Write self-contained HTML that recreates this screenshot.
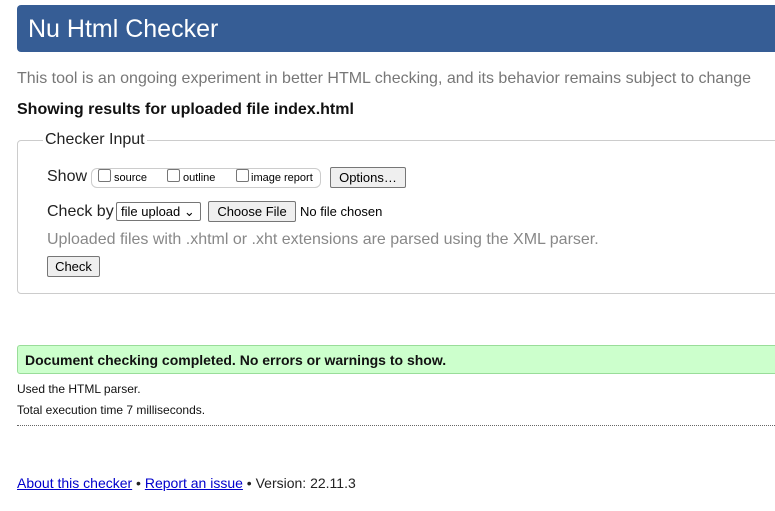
<!DOCTYPE html>
<html><head><style>
body{margin:0;width:775px;height:511px;overflow:hidden;background:#fff;font-family:"Liberation Sans",sans-serif;position:relative}
.a{position:absolute;white-space:nowrap}
.btn{position:absolute;border:1px solid #767676;background:#efefef;border-radius:2px;font-size:13px;color:#000;box-sizing:border-box;text-align:center}
.cb{position:absolute;width:11px;height:11px;border:1px solid #767676;border-radius:2px;background:#fff}
</style></head><body>
<div class="a" style="left:17px;top:5px;width:758px;height:47px;background:#365d95;border-radius:4px 0 0 4px"></div>
<div class="a" style="left:28px;top:15px;font-size:25px;color:#fff">Nu Html Checker</div>
<div class="a" style="left:17px;top:70px;font-size:16px;color:#777">This tool is an ongoing experiment in better HTML checking, and its behavior remains subject to change</div>
<div class="a" style="left:17px;top:101px;font-size:16px;font-weight:bold;color:#111">Showing results for uploaded file index.html</div>
<div class="a" style="left:17px;top:140px;width:770px;height:154px;border:1px solid #ccc;border-radius:4px;box-sizing:border-box"></div>
<div class="a" style="left:43px;top:131px;padding:0 2px;background:#fff;font-size:16px;color:#222">Checker Input</div>
<div class="a" style="left:47px;top:168px;font-size:16px;color:#222">Show</div>
<div class="a" style="left:91px;top:168px;width:228px;height:18px;border:1px solid #ccc;border-radius:6px"></div>
<div class="cb" style="left:98px;top:169px"></div><div class="a" style="left:114px;top:172px;font-size:11px">source</div>
<div class="cb" style="left:167px;top:169px"></div><div class="a" style="left:183px;top:172px;font-size:11px">outline</div>
<div class="cb" style="left:236px;top:169px"></div><div class="a" style="left:251px;top:172px;font-size:11px">image report</div>
<div class="btn" style="left:330px;top:167px;width:76px;height:21px;line-height:19px">Options…</div>
<div class="a" style="left:47px;top:203px;font-size:16px;color:#222">Check by</div>
<div class="a" style="left:116px;top:202px;width:85px;height:19px;border:1px solid #767676;border-radius:2px;box-sizing:border-box;font-size:13px;line-height:17px;padding-left:4px">file upload ⌄</div>
<div class="btn" style="left:208px;top:201px;width:88px;height:21px;line-height:19px">Choose File</div>
<div class="a" style="left:300px;top:204px;font-size:13px">No file chosen</div>
<div class="a" style="left:47px;top:231px;font-size:16px;color:#888">Uploaded files with .xhtml or .xht extensions are parsed using the XML parser.</div>
<div class="btn" style="left:47px;top:256px;width:53px;height:21px;line-height:19px">Check</div>
<div class="a" style="left:17px;top:345px;width:770px;height:29px;background:#ccffcc;border:1px solid #99dd99;border-radius:3px 0 0 3px;box-sizing:border-box"></div>
<div class="a" style="left:25px;top:352px;font-size:14px;font-weight:bold;color:#111">Document checking completed. No errors or warnings to show.</div>
<div class="a" style="left:17px;top:382px;font-size:12px;color:#111">Used the HTML parser.</div>
<div class="a" style="left:17px;top:403px;font-size:12px;color:#111">Total execution time 7 milliseconds.</div>
<div class="a" style="left:17px;top:425px;width:758px;border-top:1px dotted #666"></div>
<div class="a" style="left:17px;top:475px;font-size:14px;color:#222"><span style="color:#00c;text-decoration:underline">About this checker</span> • <span style="color:#00c;text-decoration:underline">Report an issue</span> • Version: 22.11.3</div>
</body></html>
